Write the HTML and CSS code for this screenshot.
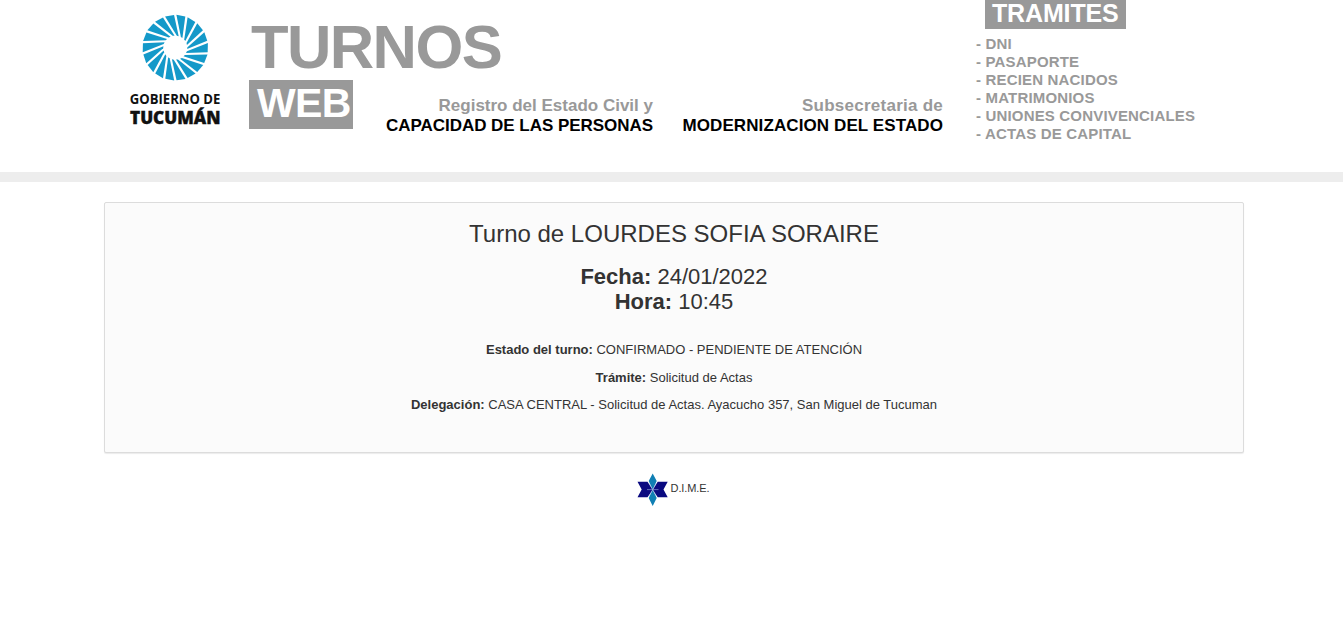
FILE: index.html
```html
<!DOCTYPE html>
<html lang="es">
<head>
<meta charset="utf-8">
<title>Turnos Web</title>
<link rel="stylesheet" href="styles.css">
</head>
<body>
<header class="banner">
  <svg class="logo" width="100" height="124" viewBox="125 10 100 124" role="img" aria-label="Gobierno de Tucumán">
    <defs><path id="blade" d="M1.100-32.900L10-31.100L7.100-9.600L5.600-10.800Z"/></defs>
    <g id="wheel" fill="#1499c9" transform="translate(175.300 47.700)"></g>
    <text class="logo-top" x="129.800" y="103.700" textLength="90.500" lengthAdjust="spacingAndGlyphs">GOBIERNO DE</text>
    <text class="logo-bottom" x="130" y="124.400" textLength="90.500" lengthAdjust="spacingAndGlyphs">TUCUMÁN</text>
  </svg>
  <div class="brand">
    <div class="brand-name">TURNOS</div>
    <div class="brand-web">WEB</div>
  </div>
  <div class="office office-civil"><span>Registro del Estado Civil y</span><strong>CAPACIDAD DE LAS PERSONAS</strong></div>
  <div class="office office-modern"><span class="sub">Subsecretaria de</span><strong class="mod">MODERNIZACION DEL ESTADO</strong></div>
  <nav class="services">
    <div class="services-title">TRAMITES</div>
    <div>- DNI</div>
    <div>- PASAPORTE</div>
    <div>- RECIEN NACIDOS</div>
    <div>- MATRIMONIOS</div>
    <div>- UNIONES CONVIVENCIALES</div>
    <div>- ACTAS DE CAPITAL</div>
  </nav>
</header>
<main class="card">
  <h1 class="title">Turno de LOURDES SOFIA SORAIRE</h1>
  <p class="when"><b>Fecha:</b> 24/01/2022<br><b>Hora:</b> 10:45</p>
  <p class="detail"><b>Estado del turno:</b> CONFIRMADO - PENDIENTE DE ATENCIÓN</p>
  <p class="detail"><b>Trámite:</b> Solicitud de Actas</p>
  <p class="detail"><b>Delegación:</b> CASA CENTRAL - Solicitud de Actas. Ayacucho 357, San Miguel de Tucuman</p>
</main>
<footer class="footer">
  <svg width="32" height="34" viewBox="0 0 32 34" aria-hidden="true">
    <path fill="#0a0a80" d="M.5 8.700H10.500L15.700 16.700L10.500 24.300H.5L4.700 16.500ZM30.700 8.700H20.700L15.700 16.700L20.700 24.300H30.700L26.500 16.500Z"/>
    <path fill="#107fb4" d="M15.700 .6L19.700 8L15.700 16.700L11.700 8ZM15.700 33L19.700 25L15.700 16.700L11.700 25Z"/>
    <path fill="none" stroke="#9fb4e0" stroke-width=".6" d="M10 16.600H21.500M12.400 10.700L19 22.700M19 10.700L12.400 22.700"/>
  </svg>
  <span>D.I.M.E.</span>
</footer>
<script src="wheel.js"></script>
</body>
</html>
```
FILE: wheel.js
```js
// Repeats the blade evenly around the emblem's centre.
const wheel = document.getElementById('wheel');
const count = 18;
for (let i = 0; i < count; i++) {
  const blade = document.createElementNS('http://www.w3.org/2000/svg', 'use');
  blade.setAttribute('href', '#blade');
  blade.setAttribute('transform', `rotate(${i * 360 / count})`);
  wheel.appendChild(blade);
}
```
FILE: styles.css
```css
* { box-sizing: border-box; }
body { margin: 0; background: #fff; color: #333; font-family: "Liberation Sans", Arial, sans-serif; font-size: 13px; }
.banner { display: flex; align-items: flex-start; height: 182px; padding-left: 125px; border-bottom: 10px solid #ededed; color: #999; font-weight: bold; overflow: hidden; }
.logo { flex: none; margin-top: 10px; }
.logo-top, .logo-bottom { font-family: "Open Sans", sans-serif; fill: #111; }
.logo-top { font-size: 15px; font-weight: 700; }
.logo-bottom { font-size: 17.500px; font-weight: 800; stroke: #111; stroke-width: .4px; }
.brand { width: 133px; padding: 12px 0 0 24px; white-space: nowrap; }
.brand-name { height: 68px; padding-left: 2px; font-size: 61.500px; line-height: 69px; letter-spacing: -1.600px; }
.brand-web { width: 104px; height: 49px; padding-left: 8px; background: #999; color: #fff; font-size: 41px; line-height: 46px; letter-spacing: -.7px; }
.office { display: flex; flex-direction: column; align-items: flex-end; margin-top: 96px; font-size: 17px; line-height: 20px; white-space: nowrap; }
.office strong { color: #000; letter-spacing: -.04px; }
.office-civil { width: 295px; }
.office-modern { width: 290px; }
.office-modern .sub { letter-spacing: .25px; }
.office-modern .mod { letter-spacing: .1px; }
.services { margin-left: 33px; font-size: 15px; line-height: 18px; letter-spacing: .17px; white-space: nowrap; }
.services-title { width: 141px; height: 29px; margin: 0 0 6px 9px; padding-left: 7px; background: #999; color: #fff; font-size: 25px; line-height: 27px; letter-spacing: -.15px; }
.card { width: 1140px; height: 251px; margin: 20px 0 0 104px; padding-top: 16px; border: 1px solid #dcdcdc; border-radius: 2px; background: #fbfbfb; box-shadow: 0 1px 1px rgba(0,0,0,.08); text-align: center; }
.title { margin: 0 0 15px; font-size: 24px; font-weight: normal; line-height: 30px; }
.when { margin: 0 0 27px; font-size: 22px; line-height: 25px; }
.detail { margin: 0 0 9.500px; line-height: 18px; }
.footer { display: flex; justify-content: center; gap: 2px; width: 1140px; margin: 20px 0 0 103px; font-size: 11px; line-height: 31px; letter-spacing: -.1px; }
```
